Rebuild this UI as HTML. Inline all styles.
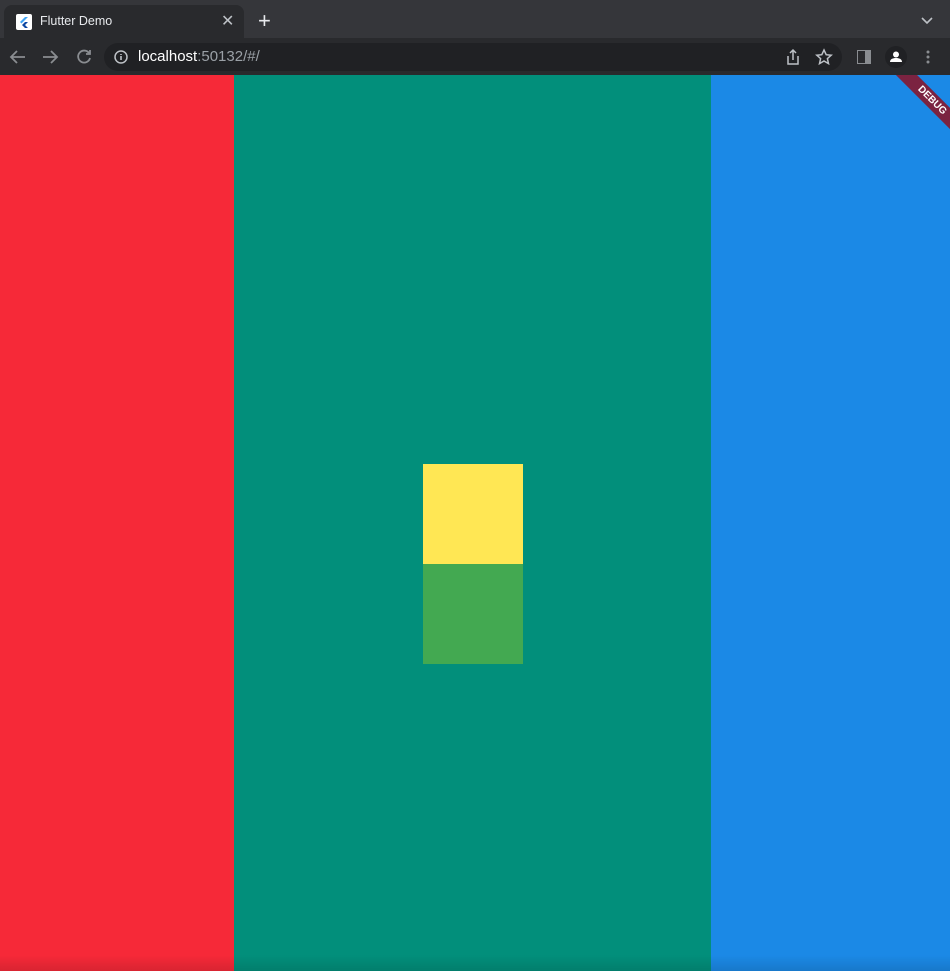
<!DOCTYPE html>
<html><head><style>
*{margin:0;padding:0;box-sizing:border-box}
body{width:950px;height:971px;overflow:hidden;background:#35363a;font-family:"Liberation Sans",sans-serif;position:relative}
.strip{position:absolute;left:0;top:0;width:950px;height:38px;background:#35363a}
.tab{position:absolute;left:4px;top:5px;width:240px;height:34px;background:#292a2d;border-radius:8px 8px 0 0}
.toolbar{position:absolute;left:0;top:38px;width:950px;height:37px;background:#292a2d}
.omni{position:absolute;left:104px;top:43px;width:738px;height:28px;background:#202124;border-radius:14px}
.t{position:absolute;color:#e8eaed;font-size:13px}
.c{position:absolute;top:75px;height:896px}
</style></head><body>
<div class="strip"></div>
<div class="tab"></div>
<div style="position:absolute;left:16px;top:14px;width:16px;height:16px;background:#fff;border-radius:2px"></div>
<svg style="position:absolute;left:16px;top:14px" width="16" height="16"><path d="M9 3L4 8l1.5 1.5L12 3z" fill="#42a5f5"/><path d="M9 8l-3 3 3 3h3l-3-3 3-3z" fill="#0d47a1"/></svg>
<div class="t" style="left:40px;top:14px;font-size:12.5px">Flutter Demo</div>
<div class="t" style="left:221px;top:11px;font-size:16px;color:#bdc1c6">✕</div>
<div class="t" style="left:258px;top:8px;font-size:22px;color:#e8eaed">+</div>
<svg style="position:absolute;left:920px;top:16px" width="14" height="10"><path d="M2 2l5 5 5-5" stroke="#bdc1c6" stroke-width="1.6" fill="none"/></svg>
<div class="toolbar"></div>
<svg style="position:absolute;left:8px;top:48px" width="90" height="18" fill="none" stroke="#8a8d91" stroke-width="1.8"><path d="M17 9H3M9 3L3 9l6 6"/><path d="M35 9h14M43 3l6 6-6 6"/><path d="M81 5a6 6 0 1 0 1 5"/><path d="M82 2v4h-4" /></svg>
<div class="omni"></div>
<svg style="position:absolute;left:114px;top:50px" width="14" height="14"><circle cx="7" cy="7" r="6" stroke="#bdc1c6" stroke-width="1.5" fill="none"/><path d="M7 6v4M7 4v1" stroke="#bdc1c6" stroke-width="1.6"/></svg>
<div class="t" style="left:138px;top:48px;font-size:15px;color:#fff">localhost<span style="color:#9aa0a6">:50132/#/</span></div>
<svg style="position:absolute;left:784px;top:48px" width="50" height="18" fill="none" stroke="#bdc1c6" stroke-width="1.5"><path d="M4 8v8h10V8M9 12V2M6 5l3-3 3 3"/><path d="M40 2l2.2 4.7 5 .5-3.8 3.4 1.1 5-4.5-2.6-4.5 2.6 1.1-5-3.8-3.4 5-.5z"/></svg>
<div style="position:absolute;left:857px;top:50px;width:14px;height:14px;border:1.5px solid #8a8d91;background:linear-gradient(90deg,transparent 60%,#8a8d91 60%)"></div>
<div style="position:absolute;left:885px;top:46px;width:22px;height:22px;border-radius:50%;background:#202124"></div>
<svg style="position:absolute;left:885px;top:46px" width="22" height="22"><circle cx="11" cy="8.5" r="3" fill="#fff"/><path d="M5 16c0-3 3-4 6-4s6 1 6 4z" fill="#fff"/></svg>
<svg style="position:absolute;left:926px;top:50px" width="4" height="14" fill="#8a8d91"><circle cx="2" cy="2" r="1.5"/><circle cx="2" cy="7" r="1.5"/><circle cx="2" cy="12" r="1.5"/></svg>
<div class="c" style="left:0;width:234px;background:#f62938"></div>
<div class="c" style="left:234px;width:477px;background:#028f7b"></div>
<div class="c" style="left:711px;width:239px;background:#1b89e6"></div>
<div style="position:absolute;left:0;top:955px;width:950px;height:16px;background:linear-gradient(transparent,rgba(0,0,0,0.12))"></div>
<div style="position:absolute;left:423px;top:464px;width:100px;height:100px;background:#ffe754"></div>
<div style="position:absolute;left:423px;top:564px;width:100px;height:100px;background:#43a951"></div>
<div style="position:absolute;left:850px;top:75px;width:100px;height:100px;overflow:hidden">
<div style="position:absolute;left:22px;top:18px;width:120px;height:15px;background:#7b2341;transform:rotate(45deg);color:#fff;font-size:10px;font-weight:bold;text-align:center;line-height:15px">DEBUG</div>
</div>
</body></html>
